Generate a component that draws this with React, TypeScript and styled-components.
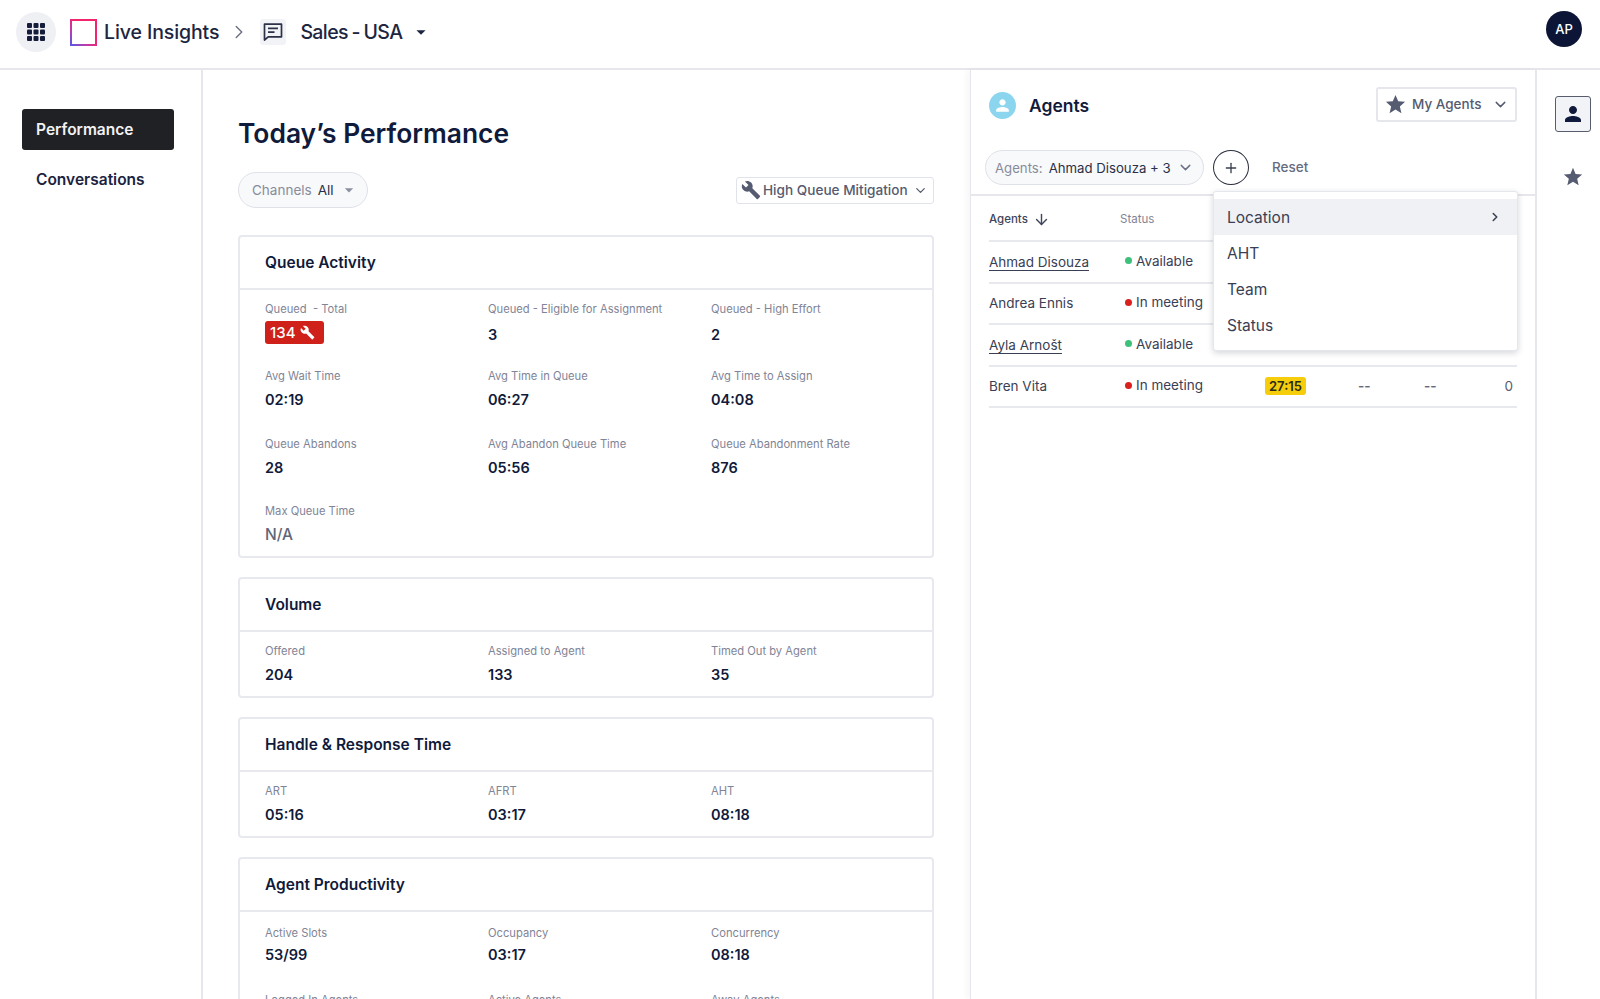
import React from 'react';
import styled, { createGlobalStyle } from 'styled-components';
import { MdArrowDropDown, MdBuild, MdPerson, MdStar } from 'react-icons/md';
import { ArrowDown, ChevronDown, ChevronRight, Plus } from 'lucide-react';

const GlobalStyle = createGlobalStyle`
  html, body {
    margin: 0;
    padding: 0;
    height: 100%;
    overflow: hidden;
    background: #fff;
    font-family: Inter, "Liberation Sans", sans-serif;
    color: #101a3a;
  }
  * { box-sizing: border-box; }
`;

const Page = styled.div`
  height: 999px;
  display: flex;
  flex-direction: column;
  overflow: hidden;
`;

const TopBar = styled.header`
  height: 70px;
  flex: none;
  display: flex;
  align-items: center;
  padding: 0 18px 4px 16px;
  border-bottom: 2px solid #e6e7ed;
`;

const GridButton = styled.button`
  width: 40px;
  height: 40px;
  border: 0;
  padding: 0;
  border-radius: 50%;
  background: #eff0f4;
  display: flex;
  align-items: center;
  justify-content: center;
  margin-right: 14px;
`;

const Logo = styled.div`
  width: 27px;
  height: 27px;
  border: 2px solid;
  border-image: linear-gradient(45deg, #5b57e6 0%, #c03aa8 32%, #f4246c 58%) 1;
  margin-right: 7px;
`;

const Crumb = styled.span`
  font-size: 19.5px;
  font-weight: 500;
  color: #1d2540;
  letter-spacing: -0.1px;
  white-space: nowrap;
`;

const CrumbTight = styled(Crumb)`
  word-spacing: -1px;
  letter-spacing: -0.6px;
`;

const CrumbChevron = styled(ChevronRight)`
  margin: 0 10px 0 9px;
  color: #6d7283;
`;

const ChatBox = styled.div`
  width: 26px;
  height: 26px;
  border-radius: 3px;
  background: #f2f3f6;
  display: flex;
  align-items: center;
  justify-content: center;
  margin-right: 14px;
`;

const Caret = styled(MdArrowDropDown)`
  margin-left: 7px;
  color: #1d2540;
`;

const Avatar = styled.div`
  margin-left: auto;
  margin-bottom: 7px;
  width: 36px;
  height: 36px;
  border-radius: 50%;
  background: #0c1535;
  color: #fff;
  font-size: 13px;
  font-weight: 500;
  display: flex;
  align-items: center;
  justify-content: center;
`;

const Body = styled.div`
  flex: 1;
  min-height: 0;
  display: flex;
`;

const Sidebar = styled.nav`
  width: 203px;
  flex: none;
  border-right: 2px solid #e6e7ed;
  padding: 39px 27px 0 22px;
`;

const NavItem = styled.div<{ $active?: boolean }>`
  height: 41px;
  display: flex;
  align-items: center;
  padding-left: 14px;
  border-radius: 3px;
  font-size: 15.5px;
  font-weight: 600;
  margin-bottom: 9px;
  background: ${p => (p.$active ? '#202124' : 'transparent')};
  color: ${p => (p.$active ? '#f2f2f4' : '#1b2340')};
`;

const Main = styled.main`
  width: 767px;
  flex: none;
  padding: 45px 36px 0 35px;
  overflow: hidden;
`;

const Title = styled.h1`
  margin: 0 0 21px;
  font-size: 26.4px;
  line-height: 36px;
  font-weight: 600;
  color: #0f1a3c;
`;

const FilterRow = styled.div`
  height: 36px;
  display: flex;
  align-items: center;
  justify-content: space-between;
  margin-bottom: 27px;
`;

const Pill = styled.div`
  height: 36px;
  display: inline-flex;
  align-items: center;
  border: 1px solid #dfe1e8;
  border-radius: 18px;
  background: #f8f9fb;
  font-size: 13.5px;
  color: #2a3048;
  white-space: nowrap;
`;

const ChannelsPill = styled(Pill)`
  width: 130px;
  padding-left: 13px;
`;

const AgentsPill = styled(Pill)`
  width: 219px;
  height: 35px;
  padding-left: 9px;
  font-size: 13.2px;
`;

const PillLabel = styled.span`
  color: #878c9c;
  margin-right: 6px;
`;

const PillCaret = styled(MdArrowDropDown)`
  margin-left: 5px;
  color: #8c90a0;
`;

const SelectButton = styled.div`
  display: inline-flex;
  align-items: center;
  border: 1px solid #e1e3ea;
  border-radius: 3px;
  background: #fff;
  color: #555b70;
  white-space: nowrap;
`;

const MitigationSelect = styled(SelectButton)`
  width: 198px;
  height: 27px;
  padding-left: 4px;
  font-size: 13.6px;
  font-weight: 500;
  gap: 2px;
`;

const Card = styled.section`
  border: 2px solid #e8e9ef;
  border-radius: 4px;
  margin-bottom: 19px;
`;

const CardHead = styled.h2`
  margin: 0;
  height: 53px;
  padding-left: 25px;
  display: flex;
  align-items: center;
  font-size: 15.5px;
  font-weight: 600;
  color: #101a3a;
  border-bottom: 2px solid #e8e9ef;
`;

const Metric = styled.div`
  height: 44px;
`;

const MetricLabel = styled.div`
  font-size: 11.2px;
  line-height: 16px;
  color: #7f8496;
`;

const MetricValue = styled.div<{ $muted?: boolean; $tall?: boolean }>`
  margin-top: ${p => (p.$tall ? '8px' : '6px')};
  font-size: ${p => (p.$muted ? '15.5px' : '14.5px')};
  line-height: 20px;
  font-weight: ${p => (p.$muted ? 500 : 600)};
  color: ${p => (p.$muted ? '#60667a' : '#101a3a')};
`;

const Metrics = styled.div`
  display: grid;
  grid-template-columns: repeat(3, 223px);
  row-gap: 23.3px;
  padding: 11px 0 9px 25px;
`;

const ProductivityMetrics = styled(Metrics)`
  padding-top: 13px;
  ${MetricValue} {
    margin-top: 4px;
  }
`;

const AlertBadge = styled.div`
  margin-top: 4px;
  width: 59px;
  height: 23px;
  border-radius: 3px;
  background: #d0201a;
  color: #fff;
  font-size: 15px;
  font-weight: 500;
  display: flex;
  align-items: center;
  gap: 5px;
  padding-left: 5px;
`;

const AgentsPanel = styled.aside`
  position: relative;
  width: 567px;
  flex: none;
  border-left: 1px solid #e6e7ed;
  border-right: 2px solid #e6e7ed;
  box-shadow: -3px 0 6px rgba(20, 25, 50, 0.04);
`;

const PanelHead = styled.div`
  height: 61px;
  margin-top: 5px;
  padding: 0 18px;
  display: flex;
  align-items: center;
`;

const AgentIcon = styled.div`
  width: 27px;
  height: 27px;
  border-radius: 50%;
  background: #8bd5ef;
  color: #fff;
  display: flex;
  align-items: center;
  justify-content: center;
  margin-right: 13px;
`;

const PanelTitle = styled.h2`
  margin: 0;
  font-size: 17.5px;
  font-weight: 600;
  color: #101a3a;
`;

const MyAgents = styled(SelectButton)`
  margin-left: auto;
  margin-bottom: 3px;
  width: 141px;
  height: 35px;
  padding-left: 6px;
  font-size: 13.5px;
  font-weight: 500;
  border-width: 2px;
  border-color: #e6e7ed;
  gap: 5px;
`;

const PushRight = styled.span<{ $inset?: number }>`
  margin-left: auto;
  margin-right: ${p => p.$inset ?? 9}px;
  display: flex;
`;

const FilterBar = styled.div`
  height: 60px;
  padding: 14px 0 0 14px;
  display: flex;
  align-items: flex-start;
  border-bottom: 2px solid #e6e7ed;
`;

const AddButton = styled.div`
  width: 36px;
  height: 35px;
  margin-left: 9px;
  border-radius: 50%;
  border: 1.5px solid #2a2e3c;
  display: flex;
  align-items: center;
  justify-content: center;
  color: #3a3f50;
`;

const ResetLink = styled.span`
  margin-left: 23px;
  line-height: 35px;
  font-size: 13.5px;
  font-weight: 500;
  color: #666c7f;
`;

const Table = styled.div`
  padding: 0 18px;
`;

const HeadRow = styled.div`
  height: 46px;
  padding-top: 2px;
  display: grid;
  grid-template-columns: 131px 1fr;
  align-items: center;
  border-bottom: 2px solid #e8e9ef;
  font-size: 11.5px;
  color: #7f8496;
`;

const HeadAgents = styled.span`
  display: flex;
  align-items: center;
  gap: 5px;
  font-weight: 500;
  color: #3e4459;
`;

const Row = styled.div`
  height: 41.5px;
  display: grid;
  grid-template-columns: 136px 140px 93px 66px 50px 1fr;
  align-items: center;
  border-bottom: 2px solid #e8e9ef;
  font-size: 13.5px;
  color: #3a4054;
`;

const AgentName = styled.span<{ $link?: boolean }>`
  text-decoration: ${p => (p.$link ? 'underline' : 'none')};
  text-underline-offset: 3px;
`;

const StatusCell = styled.span`
  display: flex;
  align-items: center;
  gap: 4px;
  margin-top: -2px;
`;

const Dot = styled.i<{ $color: string }>`
  width: 7px;
  height: 7px;
  border-radius: 50%;
  background: ${p => p.$color};
`;

const TimerBadge = styled.span`
  justify-self: start;
  width: 41px;
  height: 18px;
  border-radius: 3px;
  background: #f5cd0a;
  color: #2a2a1a;
  font-size: 13px;
  font-weight: 600;
  display: flex;
  align-items: center;
  justify-content: center;
`;

const Dash = styled.span`
  color: #62687b;
  font-weight: 600;
  margin-top: -1px;
`;

const CountCell = styled.span`
  justify-self: end;
  margin-right: 4px;
  color: #555b70;
  margin-top: -1px;
`;

const Menu = styled.div`
  position: absolute;
  top: 121px;
  left: 242px;
  width: 305px;
  height: 160px;
  padding-top: 7px;
  background: #fff;
  border: 1px solid #e6e7ed;
  border-radius: 3px;
  box-shadow: 0 2px 6px rgba(20, 25, 50, 0.18);
`;

const MenuItem = styled.div<{ $active?: boolean }>`
  height: 36px;
  padding: 0 15px 0 13px;
  display: flex;
  align-items: center;
  justify-content: space-between;
  font-size: 15.5px;
  color: #3a4054;
  background: ${p => (p.$active ? '#f0f1f5' : 'transparent')};
`;

const Rail = styled.div`
  flex: 1;
  padding-top: 26px;
  display: flex;
  flex-direction: column;
  align-items: center;
  padding-left: 8px;
  gap: 34px;
`;

const RailButton = styled.div`
  width: 36px;
  height: 36px;
  border: 1.5px solid #585d6e;
  border-radius: 3px;
  background: #f2f3f6;
  display: flex;
  align-items: center;
  justify-content: center;
  color: #0f1a3c;
`;

const RailStar = styled(MdStar)`
  color: #555b70;
`;

const GridIcon = () => (
  <svg width="18" height="18" viewBox="0 0 18 18" fill="#151d3a">
    {[0, 6.5, 13].map(y =>
      [0, 6.5, 13].map(x => <rect key={`${x}-${y}`} x={x} y={y} width="5" height="5" rx="1" />)
    )}
  </svg>
);

const ChatIcon = () => (
  <svg width="20" height="20" viewBox="0 0 20 20" fill="none" stroke="#2b3147" strokeWidth="1.7">
    <path d="M1.5 2.2h17v12.6H5.2l-3.7 3.2z" strokeLinejoin="round" />
    <path d="M5 6.4h10M5 10.2h6.5" />
  </svg>
);

type MetricData = { label: string; value?: string; muted?: boolean; tall?: boolean };

const queueMetrics: MetricData[] = [
  { label: 'Queued - Eligible for Assignment', value: '3', tall: true },
  { label: 'Queued - High Effort', value: '2', tall: true },
  { label: 'Avg Wait Time', value: '02:19' },
  { label: 'Avg Time in Queue', value: '06:27' },
  { label: 'Avg Time to Assign', value: '04:08' },
  { label: 'Queue Abandons', value: '28' },
  { label: 'Avg Abandon Queue Time', value: '05:56' },
  { label: 'Queue Abandonment Rate', value: '876' },
  { label: 'Max Queue Time', value: 'N/A', muted: true },
];

const sections: { title: string; metrics: MetricData[] }[] = [
  {
    title: 'Volume',
    metrics: [
      { label: 'Offered', value: '204' },
      { label: 'Assigned to Agent', value: '133' },
      { label: 'Timed Out by Agent', value: '35' },
    ],
  },
  {
    title: 'Handle & Response Time',
    metrics: [
      { label: 'ART', value: '05:16' },
      { label: 'AFRT', value: '03:17' },
      { label: 'AHT', value: '08:18' },
    ],
  },
];

const productivity: MetricData[] = [
  { label: 'Active Slots', value: '53/99' },
  { label: 'Occupancy', value: '03:17' },
  { label: 'Concurrency', value: '08:18' },
  { label: 'Logged In Agents' },
  { label: 'Active Agents' },
  { label: 'Away Agents' },
];

const MetricCell: React.FC<MetricData> = ({ label, value, muted, tall }) => (
  <Metric>
    <MetricLabel>{label}</MetricLabel>
    {value && (
      <MetricValue $muted={muted} $tall={tall}>
        {value}
      </MetricValue>
    )}
  </Metric>
);

const agents = [
  { name: 'Ahmad Disouza', link: true, status: 'Available', color: '#3cc07a' },
  { name: 'Andrea Ennis', link: false, status: 'In meeting', color: '#d8201c' },
  { name: 'Ayla Arnošt', link: true, status: 'Available', color: '#3cc07a' },
];

const App: React.FC = () => (
  <Page>
    <GlobalStyle />
    <TopBar>
      <GridButton>
        <GridIcon />
      </GridButton>
      <Logo />
      <Crumb>Live Insights</Crumb>
      <CrumbChevron size={22} strokeWidth={1.6} />
      <ChatBox>
        <ChatIcon />
      </ChatBox>
      <CrumbTight>Sales - USA</CrumbTight>
      <Caret size={22} />
      <Avatar>AP</Avatar>
    </TopBar>
    <Body>
      <Sidebar>
        <NavItem $active>Performance</NavItem>
        <NavItem>Conversations</NavItem>
      </Sidebar>
      <Main>
        <Title>Today’s Performance</Title>
        <FilterRow>
          <ChannelsPill>
            <PillLabel>Channels</PillLabel>All
            <PillCaret size={20} />
          </ChannelsPill>
          <MitigationSelect>
            <MdBuild size={20} />
            High Queue Mitigation
            <PushRight $inset={5}>
              <ChevronDown size={15} />
            </PushRight>
          </MitigationSelect>
        </FilterRow>
        <Card>
          <CardHead>Queue Activity</CardHead>
          <Metrics>
            <Metric>
              <MetricLabel>Queued&nbsp; - Total</MetricLabel>
              <AlertBadge>
                134 <MdBuild size={15} />
              </AlertBadge>
            </Metric>
            {queueMetrics.map(m => (
              <MetricCell key={m.label} {...m} />
            ))}
          </Metrics>
        </Card>
        {sections.map(s => (
          <Card key={s.title}>
            <CardHead>{s.title}</CardHead>
            <Metrics>
              {s.metrics.map(m => (
                <MetricCell key={m.label} {...m} />
              ))}
            </Metrics>
          </Card>
        ))}
        <Card>
          <CardHead>Agent Productivity</CardHead>
          <ProductivityMetrics>
            {productivity.map(m => (
              <MetricCell key={m.label} {...m} />
            ))}
          </ProductivityMetrics>
        </Card>
      </Main>
      <AgentsPanel>
        <PanelHead>
          <AgentIcon>
            <MdPerson size={19} />
          </AgentIcon>
          <PanelTitle>Agents</PanelTitle>
          <MyAgents>
            <MdStar size={23} />
            My Agents
            <PushRight $inset={6}>
              <ChevronDown size={17} />
            </PushRight>
          </MyAgents>
        </PanelHead>
        <FilterBar>
          <AgentsPill>
            <PillLabel>Agents:</PillLabel>Ahmad Disouza + 3
            <PushRight>
              <ChevronDown size={17} color="#6d7283" />
            </PushRight>
          </AgentsPill>
          <AddButton>
            <Plus size={16} />
          </AddButton>
          <ResetLink>Reset</ResetLink>
        </FilterBar>
        <Table>
          <HeadRow>
            <HeadAgents>
              Agents <ArrowDown size={17} strokeWidth={2} />
            </HeadAgents>
            <span>Status</span>
          </HeadRow>
          {agents.map(a => (
            <Row key={a.name}>
              <AgentName $link={a.link}>{a.name}</AgentName>
              <StatusCell>
                <Dot $color={a.color} />
                {a.status}
              </StatusCell>
            </Row>
          ))}
          <Row>
            <AgentName>Bren Vita</AgentName>
            <StatusCell>
              <Dot $color="#d8201c" />
              In meeting
            </StatusCell>
            <TimerBadge>27:15</TimerBadge>
            <Dash>--</Dash>
            <Dash>--</Dash>
            <CountCell>0</CountCell>
          </Row>
        </Table>
        <Menu>
          <MenuItem $active>
            Location <ChevronRight size={14} strokeWidth={2.6} />
          </MenuItem>
          <MenuItem>AHT</MenuItem>
          <MenuItem>Team</MenuItem>
          <MenuItem>Status</MenuItem>
        </Menu>
      </AgentsPanel>
      <Rail>
        <RailButton>
          <MdPerson size={24} />
        </RailButton>
        <RailStar size={22} />
      </Rail>
    </Body>
  </Page>
);

export default App;
